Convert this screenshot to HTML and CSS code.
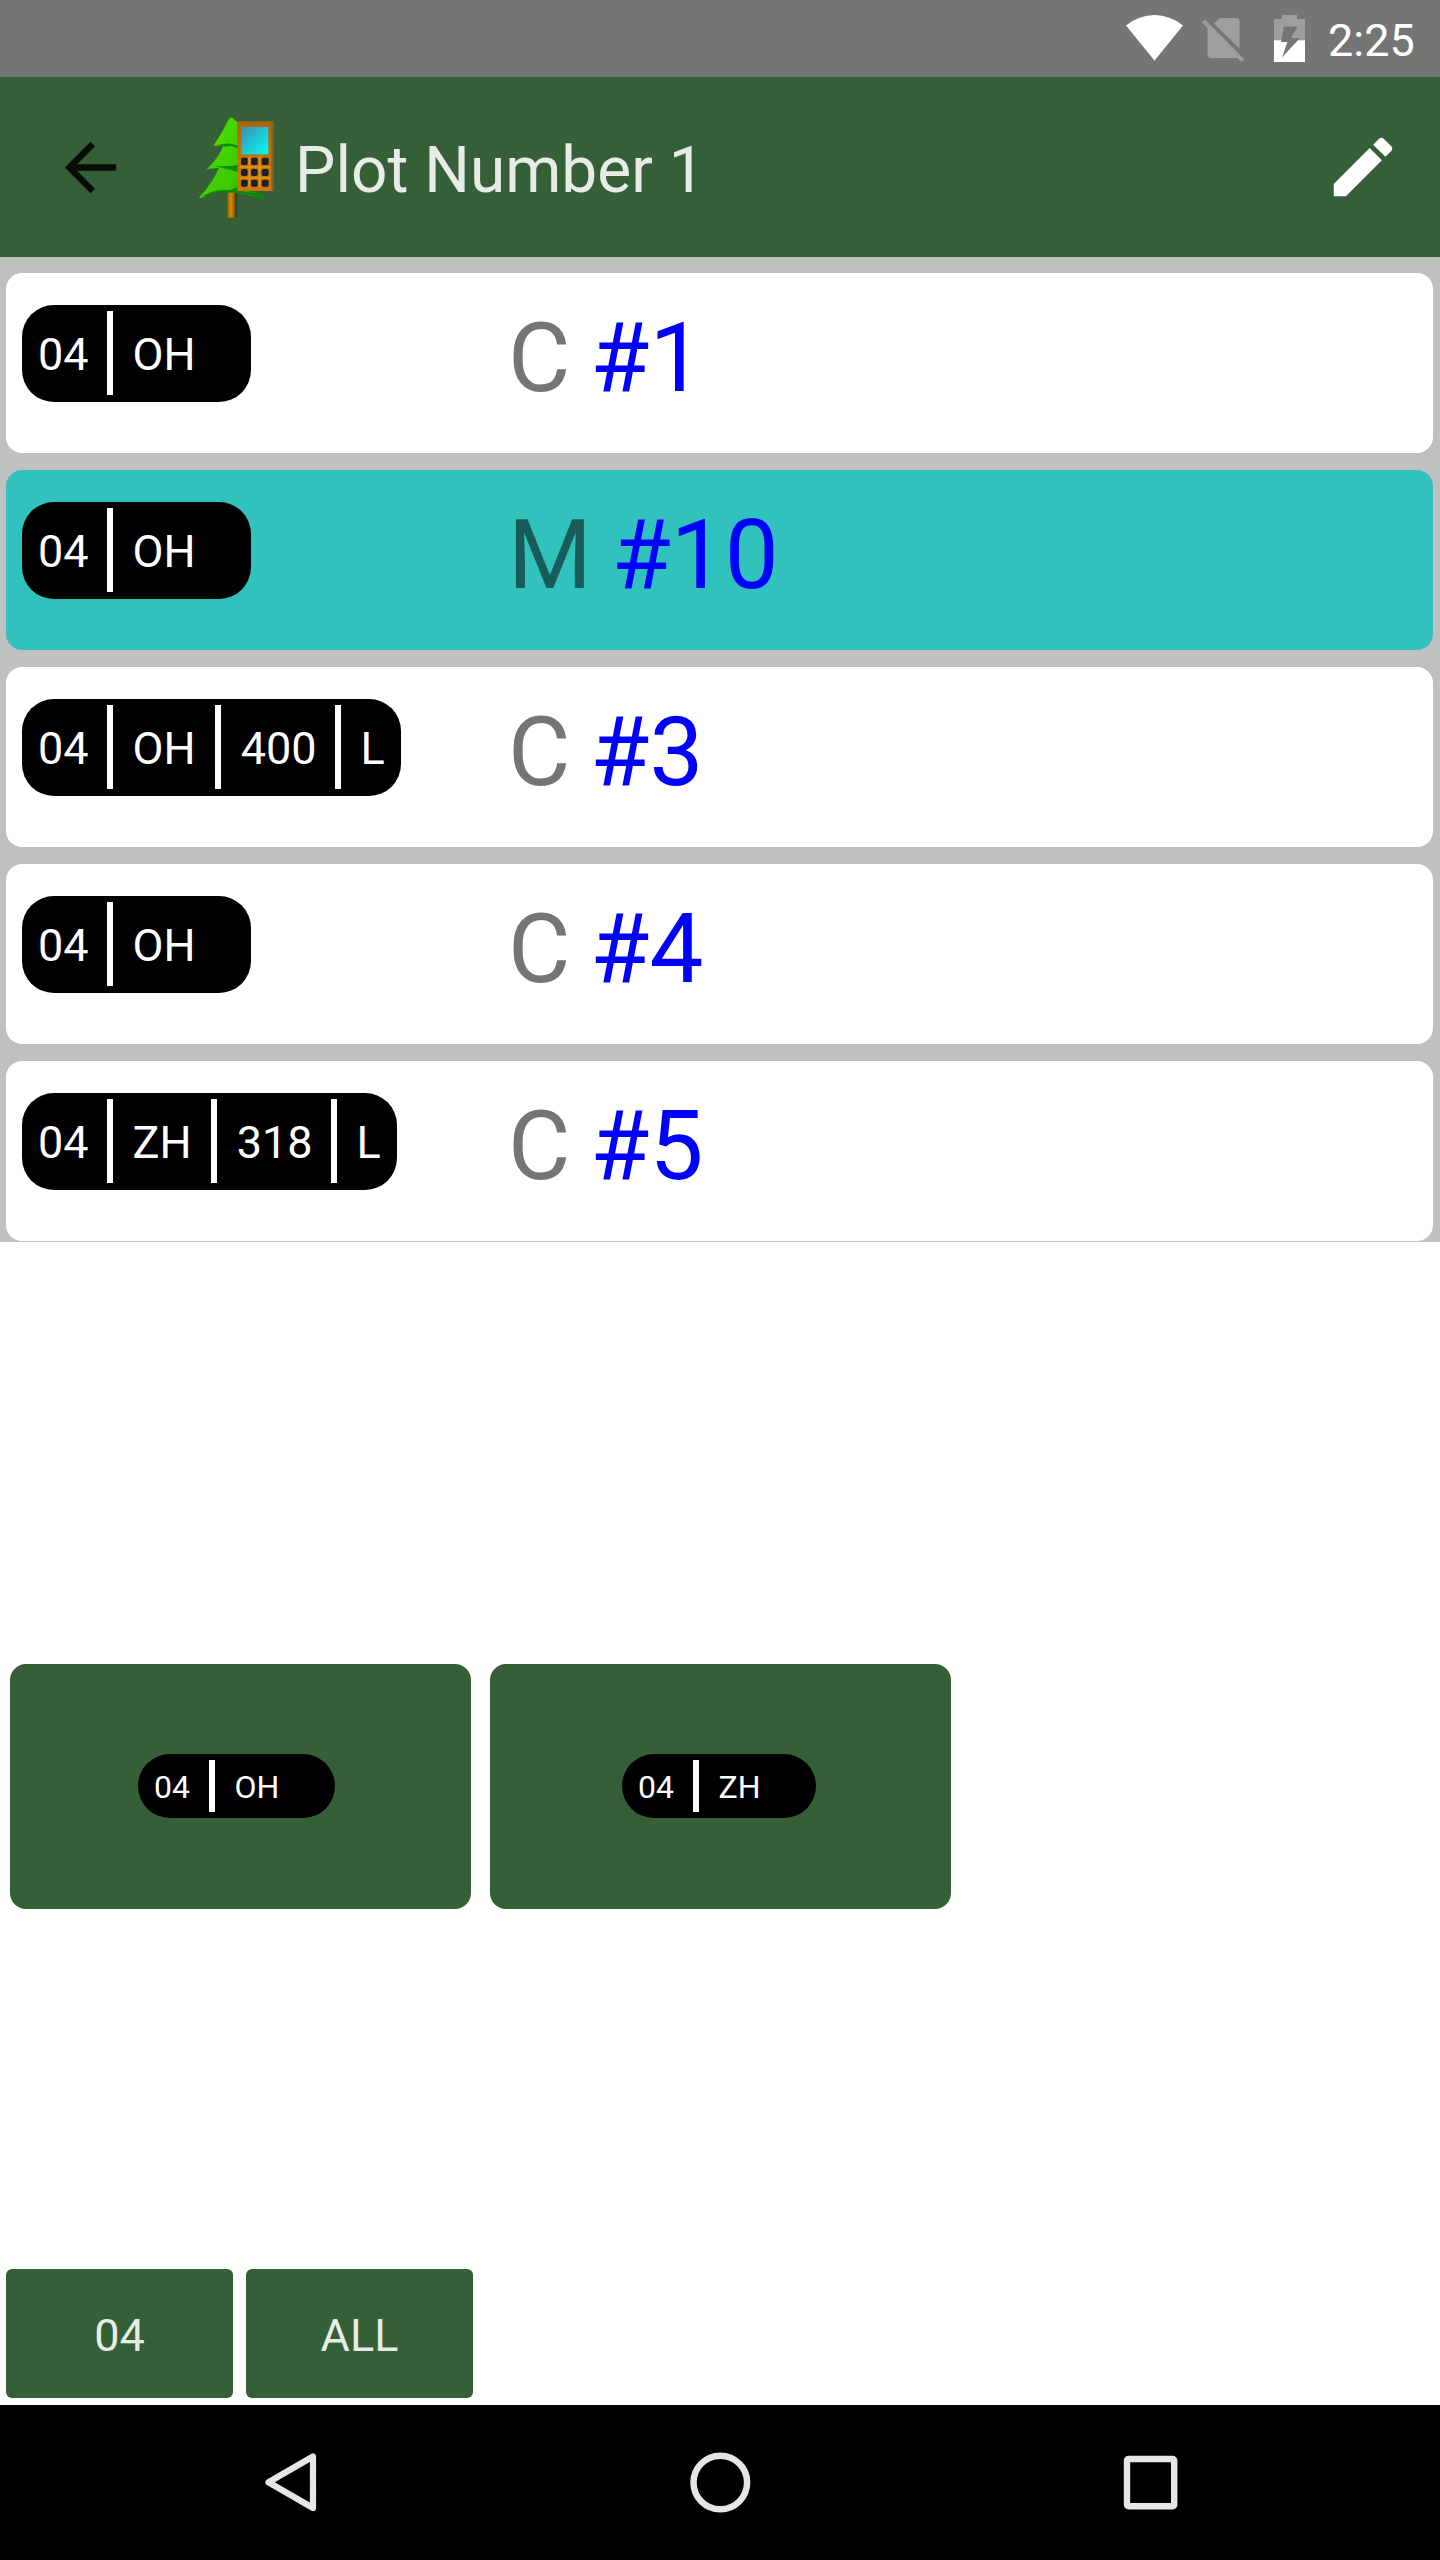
FILE: index.html
```html
<!DOCTYPE html>
<html lang="en">
<head>
<meta charset="utf-8">
<title>Plot Number 1</title>
<link rel="stylesheet" href="styles.css">
</head>
<body>
<div class="screen">
  <div class="status-bar">
    <svg class="wifi" viewBox="0 0 57 46" width="57" height="46"><path d="M0 10.500Q13 0 28.500 0T57 10.500L28.500 45.500Z" fill="#fff"/></svg>
    <svg class="sim" viewBox="0 0 43 46" width="43" height="46"><g fill="#9e9e9e"><path d="M18 1h15.500a4 4 0 0 1 4 4v26.500L12 6.500Z"/><path d="M3 2.500 0 5.500 5.500 11V37a4 4 0 0 0 4 4H35.500L39.500 45 42.200 42.300Z"/></g></svg>
    <svg class="battery" viewBox="0 0 31 47" width="31" height="47"><path d="M8 0H23V4H31V26H0V4H8Z" fill="#9e9e9e"/><path d="M0 25.300H31V47H0Z" fill="#fff"/><path d="M10 11.500H23.500L17 23H26L8 42.500L13.500 27H7Z" fill="#757575"/></svg>
    <span class="clock">2:25</span>
  </div>

  <header class="app-bar">
    <svg class="back" viewBox="0 0 24 24" width="77" height="77"><path d="M20 11H7.830l5.590-5.590L12 4l-8 8 8 8 1.410-1.410L7.830 13H20v-2z" fill="#060c06"/></svg>
    <svg class="logo" viewBox="585 135 240 315" width="80" height="105">
      <defs>
        <linearGradient id="leaf" x1="0" y1="0" x2="1" y2="1"><stop offset="0" stop-color="#4be600"/><stop offset=".65" stop-color="#3fc800"/><stop offset="1" stop-color="#138a04"/></linearGradient>
        <linearGradient id="glass" x1="0" y1="0" x2="1" y2="1"><stop offset="0" stop-color="#3f90ac"/><stop offset="1" stop-color="#00fdff"/></linearGradient>
        <linearGradient id="bark"><stop offset="0" stop-color="#a86a00"/><stop offset=".45" stop-color="#d98e00"/><stop offset="1" stop-color="#7c4c00"/></linearGradient>
        <linearGradient id="case" x1="0" y1="0" x2="0" y2="1"><stop offset="0" stop-color="#a8660c"/><stop offset=".5" stop-color="#c07408"/><stop offset="1" stop-color="#c87808"/></linearGradient>
      </defs>
      <path d="M683 362H706V443H683Z" fill="url(#bark)"/>
      <path d="M706 368V443H711V368Z" fill="#28421f"/>
      <path d="M597 383Q640 335 657 293L620 298Q655 265 671 226L640 228Q668 185 687 146Q694 138 702 148L716 160V355L792 374Q792 388 780 385Q745 372 700 366Q640 360 604 385Z" fill="url(#leaf)"/>
      <path d="M640 228Q660 221 676 230Q700 224 714 237V227Q690 218 669 222ZM622 298Q648 286 665 293Q690 297 714 307V284Q690 291 655 288Z" fill="#0b8b0b"/>
      <path d="M600 384Q640 354 690 361L715 350V362L790 373Q793 387 780 385Q740 366 690 368Q640 363 600 384Z" fill="#0b860c"/>
      <path d="M712 154H820V363H712Z" fill="url(#case)"/>
      <path d="M814 155H820V362H814Z" fill="#8a641f"/>
      <path d="M724 171H805V253H724Z" fill="url(#glass)"/>
      <g fill="#1c1f2e">
        <rect x="723" y="263" width="20" height="22" rx="5"/><rect x="753" y="263" width="20" height="22" rx="5"/><rect x="785" y="263" width="21" height="22" rx="5"/>
        <rect x="723" y="297" width="20" height="21" rx="5"/><rect x="753" y="297" width="20" height="21" rx="5"/><rect x="785" y="297" width="21" height="21" rx="5"/>
        <rect x="723" y="329" width="20" height="21" rx="5"/><rect x="753" y="329" width="20" height="21" rx="5"/><rect x="785" y="329" width="21" height="21" rx="5"/>
      </g>
      <path d="M748 260V352M779 260V352M719 291H811M719 324H811" stroke="#e8920f" stroke-width="5" fill="none"/>
    </svg>
    <h1 class="title">Plot Number 1</h1>
    <svg class="edit" viewBox="0 0 24 24" width="78" height="78"><path d="M3 17.250V21h3.750L17.810 9.940l-3.750-3.750L3 17.250zM20.710 7.040c.39-.39.39-1.020 0-1.410l-2.340-2.340c-.39-.39-1.020-.39-1.410 0l-1.830 1.830 3.750 3.750 1.830-1.830z" fill="#fff"/></svg>
  </header>

  <ul class="tree-list">
    <li class="tree"><div class="cell"><div class="chip short"><span>04</span><i></i><span>OH</span></div></div><p class="label">C <b>#1</b></p></li>
    <li class="tree selected"><div class="cell"><div class="chip short"><span>04</span><i></i><span>OH</span></div></div><p class="label">M <b>#10</b></p></li>
    <li class="tree"><div class="cell"><div class="chip"><span>04</span><i></i><span>OH</span><i></i><span>400</span><i></i><span>L</span></div></div><p class="label">C <b>#3</b></p></li>
    <li class="tree"><div class="cell"><div class="chip short"><span>04</span><i></i><span>OH</span></div></div><p class="label">C <b>#4</b></p></li>
    <li class="tree"><div class="cell"><div class="chip"><span>04</span><i></i><span>ZH</span><i></i><span>318</span><i></i><span>L</span></div></div><p class="label">C <b>#5</b></p></li>
  </ul>

  <div class="tiles">
    <div class="tile"><div class="chip small"><span>04</span><i></i><span>OH</span></div></div>
    <div class="tile second"><div class="chip small"><span>04</span><i></i><span>ZH</span></div></div>
  </div>

  <div class="filters">
    <div class="filter">04</div>
    <div class="filter">ALL</div>
  </div>

  <nav class="nav-bar">
    <svg viewBox="0 0 64 64" width="64" height="64"><path d="M55 5.500V57L10.500 31.200Z" fill="none" stroke="#e6e6e6" stroke-width="6.200" stroke-linejoin="round"/></svg>
    <svg viewBox="0 0 64 64" width="64" height="64"><circle cx="32.300" cy="31.500" r="26.800" fill="none" stroke="#e6e6e6" stroke-width="6.500"/></svg>
    <svg viewBox="0 0 64 64" width="64" height="64"><rect x="9" y="8" width="47.200" height="47.200" rx="1.500" fill="none" stroke="#e6e6e6" stroke-width="6.400"/></svg>
  </nav>
</div>
</body>
</html>
```

FILE: styles.css
```css
* { box-sizing: border-box; }
body { margin: 0; background: #fff; font-family: Roboto, sans-serif; }
svg { display: block; flex: none; }

.screen { width: 1440px; height: 2560px; display: flex; flex-direction: column; background: #fff; }

.status-bar { height: 77px; background: #757575; display: flex; align-items: flex-start; padding-left: 1126px; }
.wifi { margin-top: 15px; }
.sim { margin: 17px 0 0 19px; }
.battery { margin: 15px 0 0 29px; }
.clock { margin: 16px 0 0 23px; font-size: 45px; line-height: 50px; color: #fff; }

.app-bar { height: 180px; background: #355f36; display: flex; align-items: center; padding: 1px 38px 0 52px; }
.edit { margin-bottom: 2px; }
.logo { margin-left: 66px; }
.title { margin: 7px auto 0 20px; font-size: 64px; line-height: 76px; font-weight: 400; color: #e7ece7; }

.tree-list { margin: 0; padding: 16px 7px 1px 6px; height: 985px; background: #c0c0c0; list-style: none; display: flex; flex-direction: column; gap: 17px; }
.tree { height: 180px; border-radius: 16px; background: #fff; display: flex; align-items: flex-start; padding: 32px 16px 0; }
.tree.selected { background: #31c2be; }
.cell { width: 486px; display: flex; }
.label { margin: -3px 0 0; font-size: 96px; line-height: 112px; word-spacing: -4px; color: #757575; }
.selected .label { color: #185c5a; }
.label b { font-weight: 400; color: #0000ff; }

.chip { height: 97px; border-radius: 32px; background: #000; color: #fff; font-size: 45px; line-height: 53px; display: flex; align-items: center; padding: 0 16px; }
.chip i { width: 6px; height: 84px; background: #fff; margin: 0 19.500px 1px 18.500px; }
.chip span { padding-top: 1px; }
.chip span:nth-child(3) + i { margin-left: 19.500px; }
.chip.short { width: 229px; }
.chip.small { width: 197px; height: 64px; font-size: 32px; line-height: 38px; }
.small i { height: 52px; margin: 0 19.500px 0 19px; }

.tiles { margin-top: 422px; padding-left: 10px; display: flex; gap: 19px; }
.tile { width: 461px; height: 245px; border-radius: 16px; background: #355f36; display: flex; align-items: center; padding: 0 0 1px 128px; }
.tile.second { padding-left: 132px; }
.second .chip.small { width: 194px; }

.filters { margin-top: auto; padding: 0 6px 7px; display: flex; gap: 13px; }
.filter { width: 227px; height: 129px; border-radius: 6px; background: #355f36; color: #e7ece7; font-size: 45px; line-height: 53px; display: flex; align-items: center; justify-content: center; padding-top: 3px; }

.nav-bar { height: 155px; background: #000; display: flex; justify-content: space-between; padding: 46px 258px 0; }
```
